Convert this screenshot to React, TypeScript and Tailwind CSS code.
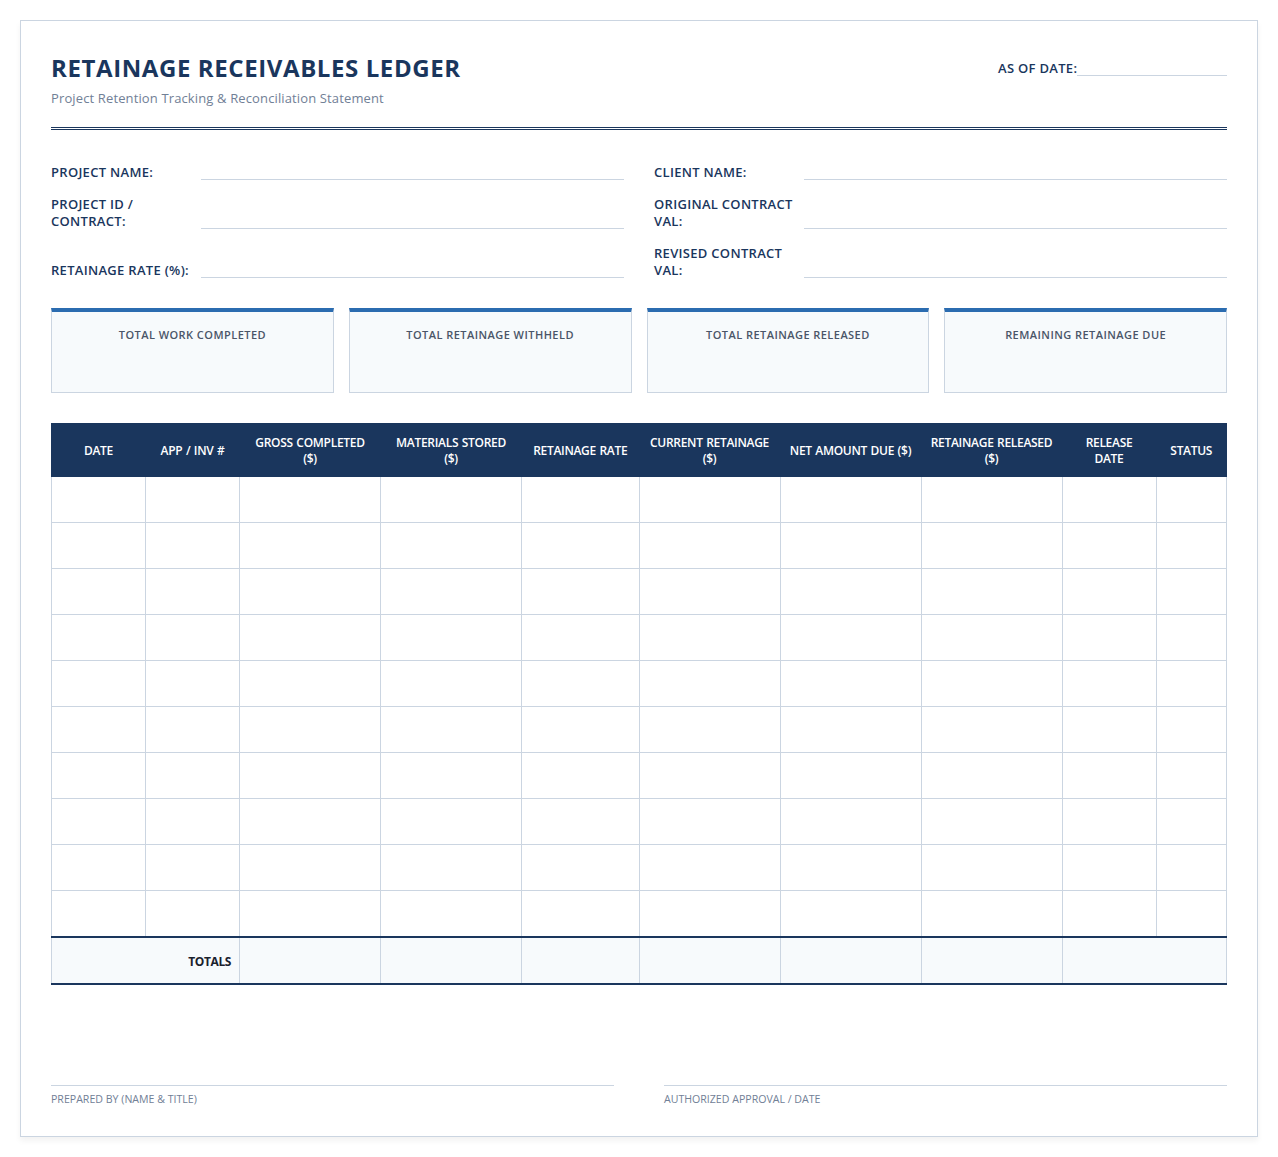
const font = "font-['Open_Sans','Noto_Sans',sans-serif]"

const headers = [
  { label: "DATE", width: "w-[8%]" },
  { label: "APP / INV #", width: "w-[8%]" },
  { label: "GROSS COMPLETED ($)", width: "w-[12%]" },
  { label: "MATERIALS STORED ($)", width: "w-[12%]" },
  { label: "RETAINAGE RATE", width: "w-[10%]" },
  { label: "CURRENT RETAINAGE ($)", width: "w-[12%]" },
  { label: "NET AMOUNT DUE ($)", width: "w-[12%]" },
  { label: "RETAINAGE RELEASED ($)", width: "w-[12%]" },
  { label: "RELEASE DATE", width: "w-[8%]" },
  { label: "STATUS", width: "w-[6%]" },
]

const summaries = [
  "TOTAL WORK COMPLETED",
  "TOTAL RETAINAGE WITHHELD",
  "TOTAL RETAINAGE RELEASED",
  "REMAINING RETAINAGE DUE",
]

const rows = Array.from({ length: 10 }, (_, i) => i)

function Field({ label, height }: { label: string; height: string }) {
  return (
    <div className={`flex items-end ${height}`}>
      <span className="mb-[-1px] w-[150px] shrink-0 pr-1 text-[13px] leading-[17px] font-semibold tracking-[0.3px] text-[#1a365d]">
        {label}
      </span>
      <span className="flex-1 border-b border-[#cbd5e1]" />
    </div>
  )
}

export default function App() {
  return (
    <div className={`bg-white p-5 ${font}`}>
      <div className="h-[1117px] border border-[#cbd5e1] bg-white px-[30px] pt-[30px] shadow-[0_4px_6px_rgba(0,0,0,0.05)]">
        <header className="flex items-start justify-between border-b-[3px] border-double border-[#1a365d] pb-5">
          <div>
            <h1 className="text-[24px] leading-[33px] font-bold tracking-[0.6px] text-[#1a365d]">
              RETAINAGE RECEIVABLES LEDGER
            </h1>
            <p className="mt-[5px] text-[13px] leading-[18px] tracking-[0.13px] text-[#718096]">
              Project Retention Tracking &amp; Reconciliation Statement
            </p>
          </div>
          <div className="mt-[9px] flex w-[229px] items-end">
            <span className="mb-[-1px] text-[13px] leading-[17px] font-semibold tracking-[0.3px] text-[#1a365d]">
              AS OF DATE:
            </span>
            <span className="flex-1 border-b border-[#cbd5e1]" />
          </div>
        </header>

        <section className="mt-[30px] grid grid-cols-2 gap-x-[30px]">
          <Field label="PROJECT NAME:" height="h-[20px]" />
          <Field label="CLIENT NAME:" height="h-[20px]" />
          <div className="mt-3">
            <Field label="PROJECT ID / CONTRACT:" height="h-[37px]" />
          </div>
          <div className="mt-3">
            <Field label="ORIGINAL CONTRACT VAL:" height="h-[37px]" />
          </div>
          <div className="mt-3">
            <Field label="RETAINAGE RATE (%):" height="h-[37px]" />
          </div>
          <div className="mt-3">
            <Field label="REVISED CONTRACT VAL:" height="h-[37px]" />
          </div>
        </section>

        <section className="mt-[30px] grid grid-cols-4 gap-[15px]">
          {summaries.map((title) => (
            <div
              key={title}
              className="h-[85px] border border-t-4 border-[#cbd5e1] border-t-[#2b6cb0] bg-[#f7fafc] pt-[15px] text-center"
            >
              <div className="text-[11px] leading-[15px] font-semibold tracking-[0.45px] text-[#4a5568]">
                {title}
              </div>
            </div>
          ))}
        </section>

        <table className="mt-[30px] w-full table-fixed border-collapse">
          <thead>
            <tr className="h-[53px] bg-[#1a365d]">
              {headers.map((h) => (
                <th
                  key={h.label}
                  className={`${h.width} border border-[#1a365d] px-2 pt-[2px] text-center align-middle text-[12px] leading-[16px] font-semibold tracking-[-0.3px] [word-spacing:0.7px] text-white`}
                >
                  {h.label}
                </th>
              ))}
            </tr>
          </thead>
          <tbody>
            {rows.map((row) => (
              <tr key={row} className="h-[46px]">
                {headers.map((h) => (
                  <td key={h.label} className="border border-[#cbd5e1]" />
                ))}
              </tr>
            ))}
            <tr className="h-[47px] border-y-2 border-[#1a365d] bg-[#f7fafc]">
              <td
                colSpan={2}
                className="border-x border-[#cbd5e1] pt-1 pr-2 text-right text-[12px] font-bold tracking-[-0.4px] text-[#1a202c]"
              >
                TOTALS
              </td>
              <td className="border-x border-[#cbd5e1]" />
              <td className="border-x border-[#cbd5e1]" />
              <td className="border-x border-[#cbd5e1]" />
              <td className="border-x border-[#cbd5e1]" />
              <td className="border-x border-[#cbd5e1]" />
              <td className="border-x border-[#cbd5e1]" />
              <td colSpan={2} className="border-x border-[#cbd5e1]" />
            </tr>
          </tbody>
        </table>

        <footer className="mt-[100px] grid grid-cols-2 gap-x-[50px]">
          {["PREPARED BY (NAME & TITLE)", "AUTHORIZED APPROVAL / DATE"].map((label) => (
            <div
              key={label}
              className="border-t border-[#cbd5e1] pt-[6px] text-[10.6px] leading-[14px] text-[#718096]"
            >
              {label}
            </div>
          ))}
        </footer>
      </div>
    </div>
  )
}
